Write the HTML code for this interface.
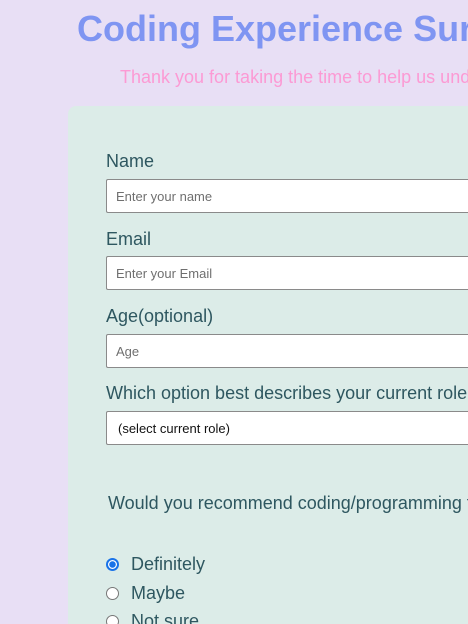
<!DOCTYPE html><html style="overflow:hidden;width:468px;height:624px"><head><style>
body{margin:0;width:468px;height:624px;overflow:hidden;background:#e8dff5;font-family:"Liberation Sans",Arial,sans-serif;position:relative}
.a{position:absolute;white-space:nowrap}
h1{position:absolute;left:77px;top:8px;margin:0;font-size:36px;font-weight:bold;color:#7f95f2;white-space:nowrap}
.sub{left:120px;top:67px;font-size:18px;color:#fc9ad4}
.card{position:absolute;left:68px;top:106px;width:400px;height:518px;background:#dcece8;border-radius:8px 0 0 0}
.lbl{left:106px;font-size:18px;color:#2e5760}
.in{position:absolute;left:106px;width:353px;height:32px;background:#fff;border:1px solid #8a8a8a;border-right:none;border-radius:2px 0 0 2px;font-size:13px;color:#6f6f6f;line-height:34px;padding-left:9px;box-sizing:content-box;overflow:hidden;white-space:nowrap}
.r{position:absolute;left:106px;width:11px;height:11px;border:1px solid #777;border-radius:50%;background:#fff}
</style></head><body>
<h1>Coding Experience Sur</h1>
<div class="a sub">Thank you for taking the time to help us und</div>
<div class="card"></div>
<div class="a lbl" style="top:151px">Name</div>
<div class="in" style="top:179px">Enter your name</div>
<div class="a lbl" style="top:229px">Email</div>
<div class="in" style="top:256px">Enter your Email</div>
<div class="a lbl" style="top:306px">Age(optional)</div>
<div class="in" style="top:334px">Age</div>
<div class="a lbl" style="top:383px">Which option best describes your current role</div>
<div class="in" style="top:411px;color:#111;padding-left:11px;width:351px">(select current role)</div>
<div class="a lbl" style="top:493px;left:108px">Would you recommend coding/programming t</div>
<div class="r" style="top:558px;border-color:#1a73e8;width:9px;height:9px;border-width:2px;background:radial-gradient(circle,#1a73e8 0 3px,#fff 3.5px)"></div>
<div class="a lbl" style="top:554px;left:131px">Definitely</div>
<div class="r" style="top:587px"></div>
<div class="a lbl" style="top:583px;left:131px">Maybe</div>
<div class="r" style="top:615px"></div>
<div class="a lbl" style="top:611px;left:131px">Not sure</div>
</body></html>
